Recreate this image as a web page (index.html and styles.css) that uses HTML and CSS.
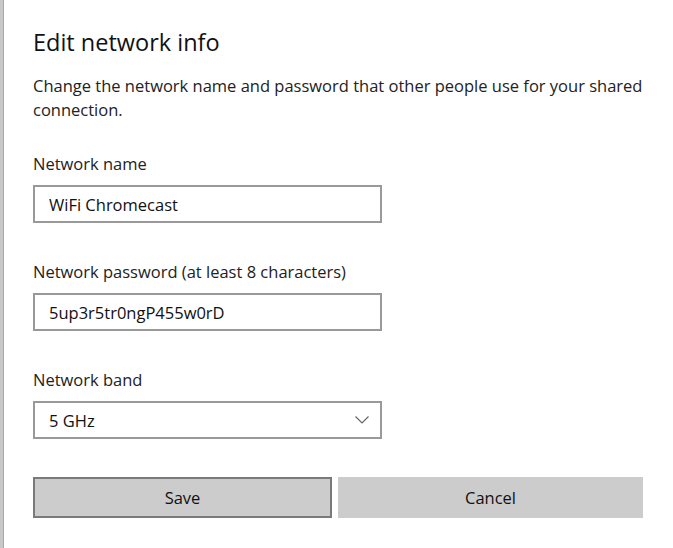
FILE: index.html
```html
<!DOCTYPE html>
<html lang="en">
<head>
<meta charset="utf-8">
<title>Edit network info</title>
<link rel="stylesheet" href="styles.css">
</head>
<body>
<div class="dialog">
  <h1 class="title">Edit network info</h1>
  <p class="desc">Change the network name and password that other people use for your shared connection.</p>

  <div class="field">
    <label class="label">Network name</label>
    <div class="box">WiFi Chromecast</div>
  </div>

  <div class="field">
    <label class="label">Network password (at least 8 characters)</label>
    <div class="box">5up3r5tr0ngP455w0rD</div>
  </div>

  <div class="field">
    <label class="label">Network band</label>
    <div class="box select">
      <span>5 GHz</span>
      <svg class="chev" width="14" height="8" viewBox="0 0 14 8"><path d="M0.5 0.5 L7 7 L13.5 0.5" fill="none" stroke="#666" stroke-width="1.2"/></svg>
    </div>
  </div>

  <div class="buttons">
    <div class="btn primary">Save</div>
    <div class="btn secondary">Cancel</div>
  </div>
</div>
</body>
</html>
```

FILE: styles.css
```css
html, body {
  margin: 0;
  padding: 0;
  background: #fff;
}
body {
  width: 673px;
  height: 548px;
  overflow: hidden;
  font-family: "Open Sans", "Noto Sans", sans-serif;
  color: #1a1a1a;
}
.dialog {
  box-sizing: border-box;
  height: 548px;
  border-left: 3px solid #c8c8c8;
  box-shadow: inset 1px 0 0 #a8a8a8;
  padding: 26px 30px 0 30px;
}
.title {
  margin: 0;
  font-weight: 400;
  font-size: 23.5px;
  line-height: 32px;
  color: #111;
}
.desc {
  margin: 16px 0 0 0;
  width: 625px;
  font-size: 16.5px;
  line-height: 24px;
  color: #222;
}
.field {
  margin-top: 31px;
}
.field + .field {
  margin-top: 38px;
}
.label {
  display: block;
  font-size: 16.5px;
  line-height: 22px;
  color: #222;
}
.box {
  box-sizing: border-box;
  margin-top: 10px;
  width: 349px;
  height: 38px;
  border: 2px solid #999;
  padding: 0 14px;
  display: flex;
  align-items: center;
  font-size: 16.5px;
  color: #111;
}
.select {
  justify-content: space-between;
  padding-right: 11px;
}
.buttons {
  margin-top: 38px;
  display: flex;
  gap: 6px;
  width: 610px;
}
.btn {
  box-sizing: border-box;
  height: 41px;
  background: #ccc;
  display: flex;
  align-items: center;
  justify-content: center;
  font-size: 16.5px;
  color: #111;
}
.btn.primary {
  width: 299px;
  border: 2px solid #7a7a7a;
}
.btn.secondary {
  width: 305px;
}
```
